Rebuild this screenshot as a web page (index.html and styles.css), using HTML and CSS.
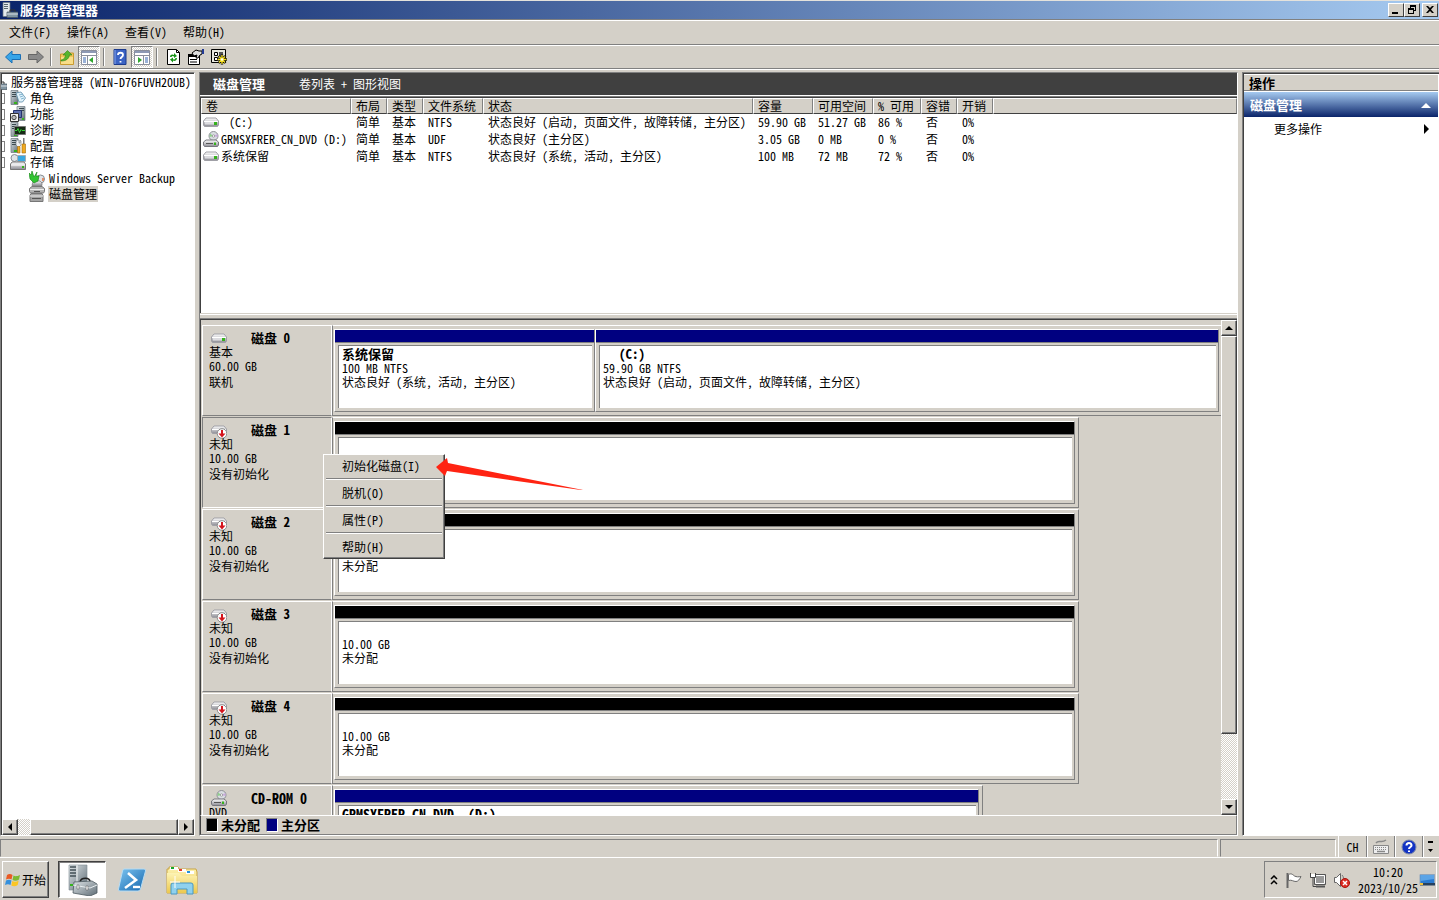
FILE: index.html
```html
<!DOCTYPE html>
<html lang="zh-CN">
<head>
<meta charset="utf-8">
<title>服务器管理器</title>
<link rel="stylesheet" href="styles.css">
</head>
<body>
<svg class="defs" aria-hidden="true">
  <defs>
    <linearGradient id="metal" x1="0" y1="0" x2="0" y2="1"><stop offset="0" stop-color="#fff"/><stop offset="1" stop-color="#8c8c94"/></linearGradient>
    <linearGradient id="steel" x1="0" y1="0" x2="1" y2="1"><stop offset="0" stop-color="#dfe5e8"/><stop offset="1" stop-color="#5e6c75"/></linearGradient>
    <linearGradient id="azure" x1="0" y1="0" x2="1" y2="1"><stop offset="0" stop-color="#7cc4f0"/><stop offset="1" stop-color="#1466ae"/></linearGradient>
    <linearGradient id="folder" x1="0" y1="0" x2="0" y2="1"><stop offset="0" stop-color="#fdf3b4"/><stop offset="1" stop-color="#ecc84e"/></linearGradient>
    <symbol id="drive" viewBox="0 0 16 10">
      <path d="M3 1h10l2.500 3v4l-1 1.500h-13L.5 8V4z" fill="url(#metal)" stroke="#a0a0a6"/>
      <path d="M1 4.500h14" stroke="#fff"/><path d="M2 5h10v2.500H2z" fill="#dcdce0"/><path d="M11 5h3v3h-3z" fill="#35b21c"/>
    </symbol>
    <symbol id="drivedown" viewBox="0 0 16 14">
      <path d="M3 1h10l2.500 3v3l-1 1.500h-13L.5 7V4z" fill="url(#metal)" stroke="#a0a0a6"/><path d="M1 4.500h14" stroke="#fff"/>
      <circle cx="11" cy="8.500" r="4.800" fill="#fff" stroke="#8a8a8a"/><path d="M10 5h2v3.500h2.500L11 12.500 7.500 8.500H10z" fill="#d4141c"/>
    </symbol>
    <symbol id="dvd" viewBox="0 0 16 16">
      <circle cx="10.500" cy="5" r="4.500" fill="#d9dde2" stroke="#8e9096"/><path d="M10.500 5L7 2.500 6.500 6z" fill="#8fd08a"/><path d="M10.500 5l4-2v3z" fill="#c9a9dc"/><circle cx="10.500" cy="5" r="1.200" fill="#fff" stroke="#777" stroke-width=".6"/>
      <path d="M3 9h10l2.500 2v3l-1 1.500h-13L.5 14v-3z" fill="url(#metal)" stroke="#77777e"/><path d="M3 12.500h7" stroke="#555"/><path d="M11 11.500h2v2.500h-2z" fill="#35b21c"/>
    </symbol>
    <symbol id="tower" viewBox="0 0 16 16">
      <path d="M1 .5h7v14H1z" fill="url(#steel)" stroke="#6b777e" stroke-width=".7"/><path d="M2 2.500h4M2 4.500h4M2 6.500h4" stroke="#3b4a50"/><path d="M4 12h3v2H4z" fill="#35b21c"/>
    </symbol>
    <symbol id="server" viewBox="0 0 16 16">
      <path d="M1 .5h7v14H1z" fill="#e4eaec" stroke="#6b777e" stroke-width=".7"/><path d="M2 2.500h4M2 4.500h4M2 6.500h4" stroke="#5b6a70"/><path d="M8 10V8h5v2" fill="none" stroke="#333"/><path d="M5 10h11v5.500H5z" fill="#8296a3" stroke="#46555f" stroke-width=".7"/><path d="M5 12h11" stroke="#d6dde2"/>
    </symbol>
    <symbol id="roles" viewBox="0 0 16 16"><use href="#tower"/><path d="M6 3l5-1 4.500 6-3 4H9z" fill="#e2f2fa" stroke="#5a8ca8" stroke-width=".8"/><path d="M9 5l4-1M10 7l3-1M11 9l3-1" stroke="#6aa6c8" stroke-width=".8"/></symbol>
    <symbol id="features" viewBox="0 0 16 16"><path d="M7 .5h8v14H7z" fill="url(#steel)" stroke="#6b777e" stroke-width=".7"/><path d="M9 2.500h5M9 4.500h5" stroke="#3b4a50"/><path d="M3.500 4.500h8v7h-8z" fill="#5d6fb0" stroke="#26336e"/><path d="M.5 7.500h8v8h-8z" fill="#f4f4f4" stroke="#333"/><circle cx="4" cy="11.500" r="2.200" fill="#bbb" stroke="#444"/><path d="M12 12h2v2h-2z" fill="#35b21c"/></symbol>
    <symbol id="diag" viewBox="0 0 16 16"><use href="#tower"/><path d="M4.500 4.500h11v8h-11z" fill="#152a15" stroke="#777"/><path d="M5 8.500h2l1-2 1.500 4 1.500-3 1 1h3" fill="none" stroke="#37d337"/></symbol>
    <symbol id="config" viewBox="0 0 16 16"><use href="#tower"/><path d="M7 2h2v3h1V2l1 1v4l-1.500 1.500V12h-2V8.500L6 7V4z" fill="#f0f2f4" stroke="#68737a" stroke-width=".6"/><path d="M13 0h1.500v6H13z" fill="#777"/><path d="M12 6h3.500v9H12zM7.500 8.500h2.500V15H7.500z" fill="#f0aa22" stroke="#a36c0a" stroke-width=".6"/></symbol>
    <symbol id="storage" viewBox="0 0 16 16"><circle cx="4.500" cy="4" r="3.500" fill="#dfe3e6" stroke="#858b91"/><path d="M7.500 1.500h8v6h-8z" fill="#39a8e2" stroke="#a5adb3"/><path d="M2 8h12l1.500 2v5.500H.5V10z" fill="url(#metal)" stroke="#777"/><path d="M1 11h14" stroke="#fff"/><path d="M12 12h2v2h-2z" fill="#35b21c"/></symbol>
    <symbol id="backup" viewBox="0 0 16 16"><circle cx="11.500" cy="9" r="4" fill="#dfe3e6" stroke="#858b91"/><path d="M13 8h2v3h-2z" fill="#e2906a"/><path d="M4 11h7l2 2v2.500H3z" fill="url(#metal)" stroke="#777" stroke-width=".7"/><path d="M0 3l2 2 1-4 2 6 3-5-1 4 3 0-1 5-4 2-4-4z" fill="#31c531" stroke="#138313" stroke-width=".6"/></symbol>
    <symbol id="disks" viewBox="0 0 16 16"><path d="M3 .500h10l2.500 2v3l-1 1.500h-13L.5 5.500v-3z" fill="#b4b4b4" stroke="#777"/><path d="M2 7.500h11l1 2v6h-13v-6z" fill="#a4a4a4" stroke="#777"/><path d="M1 10h13M1 3.500h14" stroke="#eee"/><path d="M5 5.500h6M3 12.500h9" stroke="#555"/></symbol>
    <symbol id="winlogo" viewBox="0 0 16 14"><path d="M2 2c2-1.500 4-1 5.500 0L6.500 6.500C5 5.500 3 5.500 1 6.500z" fill="#ea5a23"/><path d="M8.500 2.500C10 3.500 12 3.500 15 2l-1 4.500c-2 1.500-4.500 1.500-6.500.5z" fill="#7dba32"/><path d="M1 7.500c2-1 4-1 5.500 0L5.500 12C4 11 2 11 0 12z" fill="#3590dd"/><path d="M7.300 8c2 1 4.200 1 6.400-.5l-1 4.500c-2 1.500-4.500 1.500-6.400.5z" fill="#fbc624"/></symbol>
  </defs>
</svg>

<div class="desktop">
  <header class="titlebar">
    <svg class="i16"><use href="#server"/></svg>
    <h1>服务器管理器</h1>
    <button class="winbtn" aria-label="最小化"><svg viewBox="0 0 12 10"><path d="M2 7h6v2H2z"/></svg></button>
    <button class="winbtn" aria-label="还原"><svg viewBox="0 0 12 10"><path d="M4 0h6v6H8v3H2V3h2zM5 2v1h3v2h1V2zM3 5v3h4V5z" fill-rule="evenodd"/></svg></button>
    <button class="winbtn close" aria-label="关闭"><svg viewBox="0 0 12 10"><path d="M2 1h2l2 2 2-2h2L7 4.500 10 8H8L6 6 4 8H2l3-3.500z"/></svg></button>
  </header>

  <nav class="menubar">
    <button>文件(F)</button><button>操作(A)</button><button>查看(V)</button><button>帮助(H)</button>
  </nav>

  <div class="toolbar">
    <button aria-label="后退"><svg class="i16" viewBox="0 0 16 16"><path d="M.5 8L7 2v3.500h8.500v5H7V14z" fill="#38a5e8" stroke="#1b6fb5"/></svg></button>
    <button aria-label="前进"><svg class="i16" viewBox="0 0 16 16"><path d="M15.500 8L9 2v3.500H.5v5H9V14z" fill="#8a8a8a" stroke="#666"/></svg></button>
    <span class="sep"></span>
    <button aria-label="上移"><svg class="i16" viewBox="0 0 16 16"><path d="M1.500 5H6l1-1h7.500v11.500h-13z" fill="#efc65a" stroke="#c99b31"/><path d="M2 8h12v7H2z" fill="#f8dd89"/><path d="M2 11c3 0 4.500-3 4.500-5H4l4.500-4.500L13 6h-2.500C10 9 8 12 2 12z" fill="#55b52c" stroke="#2f8117" stroke-width=".6"/></svg></button>
    <button class="on" aria-label="显示/隐藏控制台树"><svg class="i16" viewBox="0 0 16 16"><path d="M.5 1.500h15v14H.5z" fill="#fff" stroke="#8a8f9c"/><path d="M1 2h14v2H1z" fill="#8d99b5"/><path d="M1 6.500h14M6.500 7v8" stroke="#8a8f9c"/><path d="M2 9h3M2 11h3M2 13h3" stroke="#3565b0"/><path d="M12 8v6l-4-3z" fill="#2fa62f"/></svg></button>
    <span class="sep"></span>
    <button aria-label="帮助"><svg class="i16" viewBox="0 0 16 16"><path d="M2 .5h12v15H2z" fill="#3b63c4" stroke="#1d3b8c"/><path d="M3 1v14" stroke="#88a6ec"/><path d="M6 6c0-3 5-3 5 0 0 2-2.500 2-2.500 4M8.500 12v1.500" fill="none" stroke="#fff" stroke-width="1.800"/></svg></button>
    <button class="on" aria-label="显示/隐藏操作窗格"><svg class="i16" viewBox="0 0 16 16"><path d="M.5 1.500h15v14H.5z" fill="#fff" stroke="#8a8f9c"/><path d="M1 2h14v2H1z" fill="#8d99b5"/><path d="M1 6.500h14M9.500 7v8" stroke="#8a8f9c"/><path d="M11 9h3M11 11h3M11 13h3" stroke="#3565b0"/><path d="M4 8v6l4-3z" fill="#2fa62f"/></svg></button>
    <span class="sep"></span>
    <button aria-label="刷新"><svg class="i16" viewBox="0 0 16 16"><path d="M2.500.5h9l3 3v12h-12z" fill="#fff" stroke="#000"/><path d="M11.500.5v3h3" fill="none" stroke="#000"/><path d="M5 8c0-3 3-3 4-2V4l3 3-3 2V7.500C8 6.500 7 7 6.500 8zM12 9c0 3-3 3.500-4 2.500v2l-3-3 3-2V10c1 1 2 .5 2.500-1z" fill="#169316"/></svg></button>
    <button aria-label="属性"><svg class="i16" viewBox="0 0 16 16"><path d="M.5 5.500h11v10H.5z" fill="#fff" stroke="#000"/><path d="M0 5h12v3H0zM2 10h7v1H2zM2 12.500h7v1H2z"/><path d="M4 4l4-3 3 1h3v3l-2 1-2 3H8l1-3-3 1z" fill="#ddd" stroke="#000"/><path d="M14 0h2v5h-2z" fill="#223a94"/></svg></button>
    <button aria-label="设置"><svg class="i16" viewBox="0 0 16 16"><path d="M.5.5h14v13H.5z" fill="#e8e8e0" stroke="#000"/><path d="M3.500 3.500h3v3h-3zM3.500 8.500h3v3h-3z" fill="#fff" stroke="#000"/><path d="M8 3h4v4H8z" fill="#555"/><path d="M11 5.500v10M6 10.500h10M7.500 7l7 7M14.500 7l-7 7" stroke="#000" stroke-width="2.400"/><path d="M11 6v9M6.500 10.500h9M8 7.500l6 6M14 7.500l-6 6" stroke="#f3dc20" stroke-width="1.400"/><circle cx="11" cy="10.500" r="1.200" fill="#fff"/></svg></button>
  </div>

  <main class="panes">
    <section class="tree">
      <ul>
        <li class="root"><svg class="i16"><use href="#server"/></svg><span>服务器管理器 (WIN-D76FUVH20UB)</span></li>
        <li class="node"><svg class="i16"><use href="#roles"/></svg><span>角色</span></li>
        <li class="node"><svg class="i16"><use href="#features"/></svg><span>功能</span></li>
        <li class="node"><svg class="i16"><use href="#diag"/></svg><span>诊断</span></li>
        <li class="node"><svg class="i16"><use href="#config"/></svg><span>配置</span></li>
        <li class="node"><svg class="i16"><use href="#storage"/></svg><span>存储</span></li>
        <li class="leaf"><svg class="i16"><use href="#backup"/></svg><span>Windows Server Backup</span></li>
        <li class="leaf"><svg class="i16"><use href="#disks"/></svg><span class="selected">磁盘管理</span></li>
      </ul>
      <div class="hscroll">
        <button class="raised" aria-label="向左"><svg viewBox="0 0 8 8"><path d="M6 0v8L2 4z"/></svg></button>
        <span class="gap"></span><span class="raised thumb"></span>
        <button class="raised" aria-label="向右"><svg viewBox="0 0 8 8"><path d="M2 0v8l4-4z"/></svg></button>
      </div>
    </section>

    <section class="center">
      <div class="caption"><h2>磁盘管理</h2><span>卷列表 + 图形视图</span></div>
      <div class="volumes">
        <table>
          <colgroup><col class="c150"><col class="c36"><col class="c36"><col class="c60"><col class="c270"><col class="c60"><col class="c60"><col class="c48"><col class="c36"><col class="c36"><col></colgroup>
          <thead><tr><th>卷</th><th>布局</th><th>类型</th><th>文件系统</th><th>状态</th><th>容量</th><th>可用空间</th><th>% 可用</th><th>容错</th><th>开销</th><th></th></tr></thead>
          <tbody>
            <tr><td><div class="vol"><svg class="drv"><use href="#drive"/></svg><span class="unnamed">(C:)</span></div></td><td>简单</td><td>基本</td><td>NTFS</td><td>状态良好 (启动, 页面文件, 故障转储, 主分区)</td><td>59.90 GB</td><td>51.27 GB</td><td>86 %</td><td>否</td><td>0%</td><td></td></tr>
            <tr><td><div class="vol"><svg class="i16"><use href="#dvd"/></svg><span>GRMSXFRER_CN_DVD (D:)</span></div></td><td>简单</td><td>基本</td><td>UDF</td><td>状态良好 (主分区)</td><td>3.05 GB</td><td>0 MB</td><td>0 %</td><td>否</td><td>0%</td><td></td></tr>
            <tr><td><div class="vol"><svg class="drv"><use href="#drive"/></svg><span>系统保留</span></div></td><td>简单</td><td>基本</td><td>NTFS</td><td>状态良好 (系统, 活动, 主分区)</td><td>100 MB</td><td>72 MB</td><td>72 %</td><td>否</td><td>0%</td><td></td></tr>
          </tbody>
        </table>
      </div>
      <div class="splitter"></div>
      <div class="graph">
        <div class="disks">
          <article class="disk">
            <div class="info"><svg class="drv"><use href="#drive"/></svg><h3>磁盘 0</h3><p>基本</p><p>60.00 GB</p><p class="state">联机</p></div>
            <div class="track full">
              <div class="part sys"><div class="bar"></div><div class="box"><b>系统保留</b><p>100 MB NTFS</p><p>状态良好 (系统, 活动, 主分区)</p></div></div>
              <div class="part main"><div class="bar"></div><div class="box"><b class="letter">(C:)</b><p>59.90 GB NTFS</p><p>状态良好 (启动, 页面文件, 故障转储, 主分区)</p></div></div>
            </div>
          </article>
          <article class="disk current">
            <div class="info"><svg class="drvd"><use href="#drivedown"/></svg><h3>磁盘 1</h3><p>未知</p><p>10.00 GB</p><p class="state">没有初始化</p></div>
            <div class="track raw"><div class="part free"><div class="bar"></div><div class="box"></div></div></div>
            <div class="context" role="menu">
              <button role="menuitem">初始化磁盘(I)</button><button role="menuitem">脱机(O)</button><button role="menuitem">属性(P)</button><button role="menuitem">帮助(H)</button>
              <svg class="pointer" viewBox="0 0 152 34"><path d="M0 11L11 2l1 5 140 28L11 15l-2 5z" fill="#ff2413"/></svg>
            </div>
          </article>
          <article class="disk">
            <div class="info"><svg class="drvd"><use href="#drivedown"/></svg><h3>磁盘 2</h3><p>未知</p><p>10.00 GB</p><p class="state">没有初始化</p></div>
            <div class="track raw"><div class="part free"><div class="bar"></div><div class="box"><b></b><p></p><p>未分配</p></div></div></div>
          </article>
          <article class="disk">
            <div class="info"><svg class="drvd"><use href="#drivedown"/></svg><h3>磁盘 3</h3><p>未知</p><p>10.00 GB</p><p class="state">没有初始化</p></div>
            <div class="track raw"><div class="part free"><div class="bar"></div><div class="box"><b></b><p>10.00 GB</p><p>未分配</p></div></div></div>
          </article>
          <article class="disk">
            <div class="info"><svg class="drvd"><use href="#drivedown"/></svg><h3>磁盘 4</h3><p>未知</p><p>10.00 GB</p><p class="state">没有初始化</p></div>
            <div class="track raw"><div class="part free"><div class="bar"></div><div class="box"><b></b><p>10.00 GB</p><p>未分配</p></div></div></div>
          </article>
          <article class="disk">
            <div class="info"><svg class="disc"><use href="#dvd"/></svg><h3 class="latin">CD-ROM 0</h3><p>DVD</p></div>
            <div class="track optical"><div class="part main"><div class="bar"></div><div class="box"><b class="latin">GRMSXFRER_CN_DVD&nbsp; (D:)</b></div></div></div>
          </article>
        </div>
        <div class="vscroll">
          <button class="raised" aria-label="向上"><svg viewBox="0 0 8 8"><path d="M0 6h8L4 2z"/></svg></button>
          <span class="raised thumb"></span><span class="gap"></span>
          <button class="raised" aria-label="向下"><svg viewBox="0 0 8 8"><path d="M0 2h8L4 6z"/></svg></button>
        </div>
      </div>
      <div class="legend"><span class="swatch black"></span><b>未分配</b><span class="swatch navy"></span><b>主分区</b></div>
    </section>

    <aside class="actions">
      <h2>操作</h2>
      <div class="group"><span>磁盘管理</span><svg viewBox="0 0 10 6"><path d="M0 6h10L5 1z" fill="#fff"/></svg></div>
      <button class="more"><span>更多操作</span><svg viewBox="0 0 6 10"><path d="M0 0v10l5-5z"/></svg></button>
    </aside>
  </main>

  <div class="status">
    <div class="cell grow"></div><div class="cell side"></div>
    <div class="lang">
      <button>CH</button>
      <button aria-label="键盘"><svg class="i16" viewBox="0 0 16 16"><path d="M.5 6.500h15v8H.5z" fill="#eee" stroke="#888"/><path d="M2 8.500h12M2 10.500h12" stroke="#888" stroke-dasharray="1 1"/><path d="M4 12.500h8M3 4c3-4 5 1 10-3" fill="none" stroke="#888" stroke-width="1.500"/></svg></button>
      <button aria-label="帮助"><svg class="i16" viewBox="0 0 16 16"><circle cx="8" cy="8" r="7" fill="#1233c4" stroke="#7e8aa8"/><path d="M5.500 6.500c0-3.500 5-3.500 5 0C10.500 8 8 8 8 10M8 11.500V13" fill="none" stroke="#fff" stroke-width="2"/></svg></button>
      <button class="slim" aria-label="选项"><svg viewBox="0 0 8 14"><path d="M1 1h5v2H1zM1 9h5l-2.500 3z"/></svg></button>
    </div>
  </div>

  <footer class="taskbar">
    <button class="start raised"><svg class="logo"><use href="#winlogo"/></svg>开始</button>
    <button class="task active" aria-label="服务器管理器"><svg viewBox="0 0 32 32"><path d="M3 1h18v25H3z" fill="url(#steel)" stroke="#7e8a90" stroke-width=".6"/><path d="M11 1v25" stroke="#f2f5f6"/><path d="M4 3h6M4 6h6M4 9h6M4 12h6" stroke="#435057" stroke-width="1.500"/><path d="M4 20h3v2H4z" fill="#35b21c"/><path d="M14 18c1-5 10-5 10 0" fill="none" stroke="#222" stroke-width="1.600"/><path d="M8 18l18-1 5 3v9l-7 3-17-3z" fill="url(#steel)" stroke="#4c5960" stroke-width=".8"/><path d="M7 21l17 3 7-3" fill="none" stroke="#e8eef0"/><path d="M11 21h2v4h-2zM20 22h2v4h-2z" fill="#f8f8f8" stroke="#555" stroke-width=".5"/></svg></button>
    <button class="task" aria-label="PowerShell"><svg viewBox="0 0 32 32"><path d="M8 5h20q2 0 1.500 2l-5 18q-.5 2-2.500 2H4q-2 0-1.500-2l4-18Q7 5 8 5z" fill="url(#azure)" stroke="#b6dcf4"/><path d="M12 9l8 7-11 8" fill="none" stroke="#fff" stroke-width="2.600"/><path d="M17 23h7" stroke="#fff" stroke-width="2.400"/></svg></button>
    <button class="task" aria-label="资源管理器"><svg viewBox="0 0 32 32"><path d="M1 5h2V3h9l1 2h17l1 3v21H1z" fill="url(#folder)" stroke="#c9a545"/><path d="M4 3h8v3H4zM12 5h8v3h-8zM20 7h8v3h-8z" fill="#fff"/><path d="M5 3h3v2H5z" fill="#17a829"/><path d="M13 5h3v2h-3z" fill="#e23c28"/><path d="M21 7h3v2h-3z" fill="#2490dc"/><path d="M1 9h12l3 3h15v17H1z" fill="url(#folder)"/><path d="M5 30V21q0-2 2-2h18q2 0 2 2v9h-6v-5H11v5z" fill="#8fd1ee" stroke="#4898c4"/><path d="M9 12v12M4 18h10" stroke="#fff"/></svg></button>
    <div class="tray">
      <svg class="chev" viewBox="0 0 8 10"><path d="M1 4l3-3 3 3M1 9l3-3 3 3" fill="none" stroke="#000" stroke-width="1.500"/></svg>
      <svg class="i16" viewBox="0 0 16 16"><path d="M1.500 1v15" stroke="#666" stroke-width="2"/><path d="M2.500 2.500c3-1.500 4 0 6 1.500 2 1 4 1 6.500.5-1.500 3-3 5-5 5-3 0-4-2-7.500-1z" fill="#fff" stroke="#666"/></svg>
      <svg class="i16" viewBox="0 0 16 16"><path d="M4.500 2.500h11v10h-11z" fill="#999" stroke="#555"/><path d="M5.500 3.500h9v8h-9z" fill="none" stroke="#fff"/><path d="M6 14.500h9" stroke="#555" stroke-width="2"/><path d="M.5 1v4.500h5V1M3 6v8.500h3" fill="none" stroke="#444"/><path d="M1 2h4v3H1z" fill="#fff"/></svg>
      <svg class="i16" viewBox="0 0 16 16"><path d="M.5 5.500h2l4-4v13l-4-4h-2z" fill="#fff" stroke="#666"/><path d="M8 3c2 2 2 5 1 8" fill="none" stroke="#777"/><circle cx="11" cy="11" r="4.500" fill="#de2d24" stroke="#a8140e"/><path d="M9 9l4 4M13 9l-4 4" stroke="#fff" stroke-width="1.500"/></svg>
      <time>10:20<br>2023/10/25</time>
      <svg class="i16" viewBox="0 0 16 16"><path d="M1 2.500h14.500v10H1z" fill="#2b7bd0" stroke="#8fa5bc"/><path d="M1.500 3h13.500v4L1.500 9z" fill="#5ba4e6"/><path d="M1 11h15v2.500H1z" fill="#26415e"/><path d="M1 11h3v2H1z" fill="#f5c238"/></svg>
    </div>
  </footer>
</div>
</body>
</html>
```

FILE: styles.css
```css
:root {
  --face: #d4d0c8;
  --shade: #808080;
  --dark: #404040;
  --navy: #000080;
}
* { box-sizing: border-box; margin: 0; padding: 0; }
body, button {
  font: 12px/16px "Noto Sans CJK SC", sans-serif;
  font-feature-settings: "hwid";
  color: #000;
}
body { background: var(--face); overflow: hidden; }
button { background: none; border: 0; white-space: nowrap; }
ul { list-style: none; }
svg { display: block; flex: none; }
h1, h2, h3, b { font-size: 13px; font-weight: 700; }
.latin { font-size: 14px; }
.defs { position: absolute; width: 0; height: 0; }
.i16 { width: 16px; height: 16px; }
.drv { width: 16px; height: 10px; }
.drvd { width: 16px; height: 14px; }
.desktop { display: flex; flex-direction: column; height: 100vh; background: var(--face); }

.raised {
  background: var(--face);
  border: 1px solid;
  border-color: #fff var(--dark) var(--dark) #fff;
  box-shadow: inset -1px -1px var(--shade);
}
.raised svg { width: 8px; height: 8px; margin: auto; }
.gap {
  background: repeating-conic-gradient(#fff 0 25%, var(--face) 0 50%) 0 0 / 2px 2px;
}

.titlebar {
  display: flex;
  align-items: center;
  height: 19px;
  padding: 0 1px 0 2px;
  border-top: 1px solid #e4e2dc;
  background: linear-gradient(90deg, #0a246a, #a6caf0);
}
.titlebar h1 { flex: 1; margin-left: 2px; line-height: 18px; color: #fff; }
.winbtn {
  width: 16px;
  height: 14px;
  padding: 1px;
  background: var(--face);
  border: 1px solid;
  border-color: #fff var(--dark) var(--dark) #fff;
}
.winbtn svg { width: 12px; height: 10px; }
.winbtn.close { margin-left: 2px; }

.menubar, .toolbar {
  display: flex;
  align-items: center;
  border-top: 1px solid #fff;
  border-bottom: 1px solid var(--shade);
}
.menubar { height: 25px; margin-top: 1px; padding-left: 1px; box-shadow: 0 -1px var(--shade); }
.menubar button { padding: 0 8px 2px; line-height: 20px; }
.toolbar { height: 24px; padding-left: 1px; box-shadow: 0 1px #fff; }
.toolbar button { display: grid; place-items: center; width: 23px; height: 22px; }
.toolbar .on {
  width: 22px;
  border: 1px solid;
  border-color: var(--shade) #fff #fff var(--shade);
  background: repeating-conic-gradient(#fff 0 25%, var(--face) 0 50%) 0 0 / 2px 2px;
}
.toolbar .sep { width: 2px; height: 18px; margin: 0 3px; border-left: 1px solid var(--shade); border-right: 1px solid #fff; }

.panes {
  flex: 1;
  min-height: 0;
  display: grid;
  grid-template-columns: 195px minmax(0, 1fr) 197px;
  gap: 4px;
  margin-top: 3px;
}
.panes > * { min-width: 0; min-height: 0; overflow: hidden; }
.tree, .actions {
  display: flex;
  flex-direction: column;
  background: #fff;
  border: 1px solid;
  border-color: var(--shade) #fff #fff var(--shade);
  box-shadow: inset 1px 1px var(--dark);
}
.tree ul { flex: 1; padding-top: 1px; overflow: hidden; }
.tree li { display: flex; align-items: center; height: 16px; white-space: nowrap; }
.root { margin-left: -10px; gap: 4px; }
.node { gap: 4px; padding-left: 1px; }
.node::before { content: ""; width: 2px; height: 9px; margin-right: 1px; border: 1px solid var(--shade); border-left: 0; }
.leaf { padding-left: 28px; gap: 3px; }
.leaf span { padding: 0 1px; }
.selected { background: var(--face); }
.hscroll { display: flex; height: 16px; margin-left: 1px; background: var(--face); }
.hscroll button, .vscroll button { display: grid; width: 16px; height: 16px; }
.hscroll .gap { width: 12px; }
.hscroll .thumb { flex: 1; }

.center {
  display: flex;
  flex-direction: column;
  border: 1px solid;
  border-color: var(--shade) #fff #fff var(--shade);
}
.caption { display: flex; align-items: center; gap: 34px; height: 22px; padding-left: 13px; background: #404040; color: #fff; }
.volumes {
  height: 216px;
  margin-top: 2px;
  border-top: 1px solid var(--dark);
  border-left: 1px solid var(--dark);
  box-shadow: 0 -1px var(--shade), 0 -2px #fff;
  background: #fff;
}
table { width: 100%; table-layout: fixed; border-collapse: separate; border-spacing: 0; white-space: nowrap; }
.c36 { width: 36px; }
.c48 { width: 48px; }
.c60 { width: 60px; }
.c150 { width: 150px; }
.c270 { width: 270px; }
th {
  height: 16px;
  padding-left: 4px;
  font-weight: 400;
  line-height: 14px;
  text-align: left;
  background: var(--face);
  border: 1px solid;
  border-color: #fff var(--shade) var(--dark) #fff;
}
td { height: 17px; padding: 0 0 1px 5px; line-height: 16px; }
td:first-child { padding-left: 2px; }
.vol { display: flex; align-items: center; gap: 2px; }
.unnamed { padding-left: 8px; }
.splitter { height: 6px; margin-top: 1px; background: var(--face); border-top: 1px solid #fff; border-bottom: 1px solid var(--dark); box-shadow: inset 0 -1px var(--shade); }

.graph { flex: 1; min-height: 0; display: flex; border-left: 1px solid var(--dark); }
.disks { flex: 1; min-width: 0; overflow: hidden; padding: 5px 0 0 1px; }
.disk { position: relative; display: flex; height: 92px; padding-bottom: 1px; }
.info {
  width: 130px;
  padding: 5px 0 0 6px;
  border: 1px solid;
  border-color: #fff #fff var(--shade) #fff;
}
.current .info { border-color: var(--shade) #fff #fff var(--shade); }
.info svg { float: left; margin: 2px 0 -3px 2px; }
.info .disc { width: 16px; height: 16px; margin-top: -1px; }
.info h3 { margin-left: 42px; line-height: 14px; height: 14px; }
.info p, .box p { line-height: 14px; height: 14px; white-space: nowrap; }
.info p { clear: left; }
.info .state { margin-top: 2px; }
.track {
  display: flex;
  border: 1px solid;
  border-color: #fff var(--shade) var(--shade) var(--shade);
  padding: 3px 3px 3px 1px;
}
.full { flex: 1; min-width: 0; border-right: 0; padding-right: 2px; }
.raw { width: 747px; }
.optical { width: 651px; }
.part {
  display: flex;
  flex-direction: column;
  border: 1px solid;
  border-color: #fff var(--shade) var(--shade) #fff;
}
.sys { width: 261px; }
.main, .free { flex: 1; min-width: 0; }
.bar { height: 13px; background: var(--navy); border-bottom: 1px solid var(--shade); }
.free .bar { background: #000; }
.box {
  flex: 1;
  margin: 2px 2px 3px 3px;
  padding: 1px 0 0 3px;
  background: #fff;
  border-top: 1px solid var(--shade);
  border-left: 1px solid var(--shade);
  overflow: hidden;
}
.box b { display: block; height: 14px; line-height: 14px; white-space: nowrap; }
.box .letter { padding-left: 16px; }

.context {
  position: absolute;
  z-index: 2;
  left: 121px;
  top: 37px;
  width: 122px;
  padding: 2px;
  background: var(--face);
  border: 1px solid;
  border-color: #fff var(--dark) var(--dark) #fff;
  box-shadow: inset -1px -1px var(--shade);
}
.context button { display: block; width: 100%; height: 21px; padding: 0 0 3px 16px; text-align: left; line-height: 18px; }
.context button + button { height: 27px; padding: 4px 0 3px 16px; border-top: 1px solid var(--shade); box-shadow: inset 0 1px #fff; }
.context button:last-of-type { height: 24px; padding-bottom: 0; }
.pointer { position: absolute; left: 112px; top: 1px; width: 152px; height: 34px; }

.vscroll { display: flex; flex-direction: column; width: 16px; }
.vscroll .thumb { flex: 398; }
.vscroll .gap { flex: 65; }
.legend {
  display: flex;
  align-items: center;
  height: 20px;
  padding: 0 0 1px 5px;
  border: 1px solid;
  border-color: #fff var(--shade) var(--shade) var(--dark);
}
.swatch { width: 12px; height: 14px; margin-right: 3px; border: 1px solid; border-color: var(--shade) #fff #fff var(--shade); }
.legend b + .swatch { margin-left: 6px; }
.black { background: #000; }
.navy { background: var(--navy); }

.actions { border-right: 0; padding: 2px 1px 0 1px; }
.actions h2 { height: 16px; padding-left: 5px; line-height: 15px; background: var(--face); border-bottom: 1px solid var(--shade); }
.group {
  display: flex;
  align-items: center;
  justify-content: space-between;
  height: 25px;
  margin-top: 1px;
  padding: 0 7px 0 6px;
  font-size: 13px;
  font-weight: 700;
  color: #fff;
  background: linear-gradient(#a6caf0, #0a246a);
}
.group svg { width: 10px; height: 6px; }
.more { display: flex; align-items: center; justify-content: space-between; height: 24px; padding: 0 8px 0 30px; }
.more svg { width: 6px; height: 10px; }

.status { display: flex; height: 21px; gap: 2px; }
.cell { margin-top: 3px; border: 1px solid; border-color: var(--shade) #fff var(--face) var(--shade); }
.grow { flex: 1; }
.side { width: 116px; }
.lang { display: flex; width: 101px; border-left: 1px solid #fff; }
.lang button { display: grid; place-items: center; width: 28px; border-right: 1px solid var(--shade); box-shadow: 1px 0 #fff; }
.lang .slim { width: 16px; border: 0; box-shadow: none; }
.slim svg { width: 8px; height: 14px; }

.taskbar { display: flex; height: 43px; padding: 3px 2px 2px; border-top: 1px solid #fff; align-items: stretch; }
.start { display: flex; align-items: center; width: 47px; padding-left: 2px; gap: 1px; margin-right: 9px; }
.start .logo { width: 16px; height: 14px; margin: 0; }
.task { display: grid; place-items: center; width: 48px; margin-right: 2px; }
.task svg { width: 32px; height: 32px; }
.active { background: #fff; border: 1px solid; border-color: var(--dark) #fff #fff var(--dark); box-shadow: inset 1px 1px var(--shade); }
.tray { display: flex; align-items: center; gap: 8px; margin-left: auto; padding: 0 1px 0 5px; border: 1px solid; border-color: var(--shade) #fff #fff var(--shade); }
.tray .chev { width: 8px; height: 10px; }
.tray time { width: 60px; text-align: center; white-space: nowrap; }
.tray time + svg { margin-left: -7px; }
```
